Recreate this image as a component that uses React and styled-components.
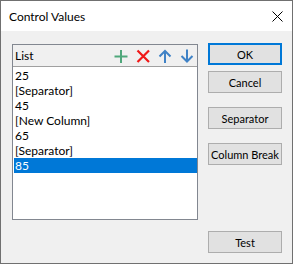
import React from "react";
import styled, { createGlobalStyle } from "styled-components";

const Global = createGlobalStyle`
  html, body { margin: 0; padding: 0; background: #ffffff; }
  body { font-family: Lato, "Noto Sans", sans-serif; font-size: 12px; color: #000; }
`;

const Window = styled.div`
  box-sizing: border-box;
  width: 293px;
  height: 264px;
  border: 1px solid #707070;
  display: flex;
  flex-direction: column;
  background: #f0f0f0;
`;

const TitleBar = styled.div`
  height: 30px;
  background: #ffffff;
  display: flex;
  align-items: center;
  justify-content: space-between;
  padding: 0 9px 0 8px;
  flex: none;
`;

const Title = styled.span`
  font-size: 12px;
  color: #000;
  margin-top: 1px;
`;

const CloseIcon = styled.svg`
  width: 11px;
  height: 11px;
  margin-top: 1px;
`;

const Content = styled.div`
  flex: 1;
  display: flex;
  padding: 12px 10px 10px 11px;
  gap: 10px;
  min-height: 0;
`;

const ListBox = styled.div`
  box-sizing: border-box;
  margin-top: 1px;
  width: 186px;
  height: 176px;
  border: 1px solid #828790;
  background: #ffffff;
  display: flex;
  flex-direction: column;
`;

const ListHeader = styled.div`
  height: 21px;
  background: #f0f0f0;
  border-bottom: 1px solid #a0a0a0;
  display: flex;
  align-items: center;
  padding: 0 2px 0 2px;
  flex: none;
  font-size: 12px;
`;

const HeaderLabel = styled.span`
  flex: 1;
`;

const IconBar = styled.div`
  display: flex;
  gap: 6px;
  align-items: center;
`;

const Items = styled.div`
  padding-top: 1px;
  display: flex;
  flex-direction: column;
`;

const Item = styled.div`
  height: 15px;
  line-height: 15px;
  font-size: 12px;
  margin-left: ${(p) => (p.$selected ? "1px" : "0")};
  padding-left: ${(p) => (p.$selected ? "1px" : "2px")};
  background: ${(p) => (p.$selected ? "#0078d7" : "transparent")};
  color: ${(p) => (p.$selected ? "#ffffff" : "#000000")};
  white-space: nowrap;
  overflow: hidden;
`;

const ButtonCol = styled.div`
  display: flex;
  flex-direction: column;
  width: 74px;
`;

const Button = styled.div`
  box-sizing: border-box;
  height: 22px;
  width: 74px;
  background: #e1e1e1;
  border: ${(p) => (p.$default ? "2px solid #0078d7" : "1px solid #adadad")};
  display: flex;
  align-items: center;
  justify-content: center;
  font-size: 11px;
  color: #000;
  margin-top: ${(p) => p.$mt || "0"};
  white-space: nowrap;
`;

const Spacer = styled.div`
  flex: 1;
`;

const PlusIcon = () => (
  <svg width="16" height="16" viewBox="0 0 16 16">
    <path d="M8 2 V15 M1.5 8.5 H14.5" stroke="#4fa77b" strokeWidth="2" fill="none" />
  </svg>
);

const CrossIcon = () => (
  <svg width="16" height="16" viewBox="0 0 16 16">
    <path d="M2.5 2.5 L14 14 M14 2.5 L2.5 14" stroke="#f01818" strokeWidth="2.2" fill="none" />
  </svg>
);

const UpIcon = () => (
  <svg width="16" height="16" viewBox="0 0 16 16">
    <path d="M8 3 V15 M2.5 8.5 L8 3 L13.5 8.5" stroke="#3f82c6" strokeWidth="2" fill="none" />
  </svg>
);

const DownIcon = () => (
  <svg width="16" height="16" viewBox="0 0 16 16">
    <path d="M8 1.5 V13.5 M2.5 8 L8 13.5 L13.5 8" stroke="#3f82c6" strokeWidth="2" fill="none" />
  </svg>
);

const items = ["25", "[Separator]", "45", "[New Column]", "65", "[Separator]", "85"];

export default function App() {
  return (
    <>
      <Global />
      <Window>
        <TitleBar>
          <Title>Control Values</Title>
          <CloseIcon viewBox="0 0 11 11">
            <path d="M0.5 0.5 L10.5 10.5 M10.5 0.5 L0.5 10.5" stroke="#000" strokeWidth="1" fill="none" />
          </CloseIcon>
        </TitleBar>
        <Content>
          <ListBox>
            <ListHeader>
              <HeaderLabel>List</HeaderLabel>
              <IconBar>
                <PlusIcon />
                <CrossIcon />
                <UpIcon />
                <DownIcon />
              </IconBar>
            </ListHeader>
            <Items>
              {items.map((t, i) => (
                <Item key={i} $selected={i === items.length - 1}>
                  {t}
                </Item>
              ))}
            </Items>
          </ListBox>
          <ButtonCol>
            <Button $default>OK</Button>
            <Button $mt="6px">Cancel</Button>
            <Button $mt="14px">Separator</Button>
            <Button $mt="14px">Column Break</Button>
            <Spacer />
            <Button>Test</Button>
          </ButtonCol>
        </Content>
      </Window>
    </>
  );
}
